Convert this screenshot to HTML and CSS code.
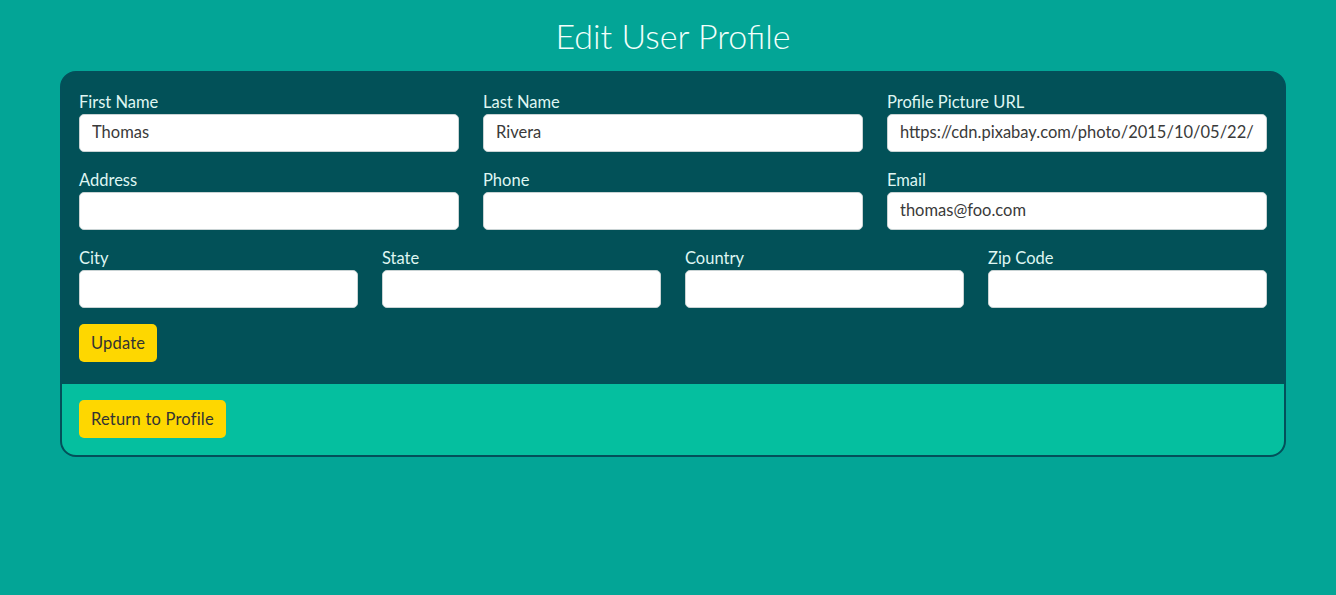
FILE: index.html
```html
<!DOCTYPE html>
<html lang="en">
<head>
<meta charset="utf-8">
<title>Edit User Profile</title>
<link rel="stylesheet" href="styles.css">
</head>
<body>
<div class="page">
  <h1 class="title">Edit User Profile</h1>
  <div class="card">
    <form class="form">
      <div class="row row-3">
        <label class="field"><span class="label">First Name</span><input class="input" type="text" value="Thomas"></label>
        <label class="field"><span class="label">Last Name</span><input class="input" type="text" value="Rivera"></label>
        <label class="field"><span class="label">Profile Picture URL</span><input class="input" type="text" value="https://cdn.pixabay.com/photo/2015/10/05/22/37/blank-profile-picture-973460_960_720.png"></label>
      </div>
      <div class="row row-3">
        <label class="field"><span class="label">Address</span><input class="input" type="text" value=""></label>
        <label class="field"><span class="label">Phone</span><input class="input" type="text" value=""></label>
        <label class="field"><span class="label">Email</span><input class="input" type="text" value="thomas@foo.com"></label>
      </div>
      <div class="row row-4">
        <label class="field"><span class="label">City</span><input class="input" type="text" value=""></label>
        <label class="field"><span class="label">State</span><input class="input" type="text" value=""></label>
        <label class="field"><span class="label">Country</span><input class="input" type="text" value=""></label>
        <label class="field"><span class="label">Zip Code</span><input class="input" type="text" value=""></label>
      </div>
      <div class="actions">
        <button class="btn" type="button">Update</button>
      </div>
    </form>
    <div class="footer">
      <button class="btn" type="button">Return to Profile</button>
    </div>
  </div>
</div>
</body>
</html>
```
FILE: styles.css
```css
* { box-sizing: border-box; }
html, body {
  margin: 0;
  padding: 0;
}
body {
  background: #03a596;
  font-family: "Lato", "Open Sans", sans-serif;
  color: #333;
  height: 595px;
  overflow: hidden;
}
.page {
  padding: 16px 50px 0 60px;
}
.title {
  margin: 0 0 15px 0;
  text-align: center;
  font-size: 34px;
  line-height: 40px;
  font-weight: 300;
  color: #f2fffb;
}
.card {
  border: 2px solid #03505a;
  border-radius: 16px;
  overflow: hidden;
  background: #025158;
}
.form {
  padding: 17px 17px 22px 17px;
  display: flex;
  flex-direction: column;
  gap: 16px;
}
.row {
  display: grid;
  column-gap: 24px;
}
.row-3 { grid-template-columns: repeat(3, 1fr); }
.row-4 { grid-template-columns: repeat(4, 1fr); }
.field {
  display: flex;
  flex-direction: column;
  min-width: 0;
}
.label {
  display: block;
  font-size: 16.5px;
  line-height: 24px;
  color: #dff6f2;
}
.input {
  display: block;
  width: 100%;
  height: 38px;
  margin: 0;
  padding: 0 12px 2px 12px;
  border: 1px solid #c9d3d4;
  border-radius: 5px;
  background: #fff;
  font-family: inherit;
  font-size: 16.5px;
  color: #3a3a3a;
  outline: none;
}
.actions {
  display: flex;
}
.btn {
  height: 38px;
  padding: 0 12px 1px 12px;
  border: none;
  border-radius: 5px;
  background: #fed700;
  font-family: inherit;
  font-size: 16.5px;
  letter-spacing: 0.2px;
  color: #333;
  cursor: pointer;
}
.footer {
  background: #05bf9f;
  padding: 16px 17px 17px 17px;
  display: flex;
}
```
